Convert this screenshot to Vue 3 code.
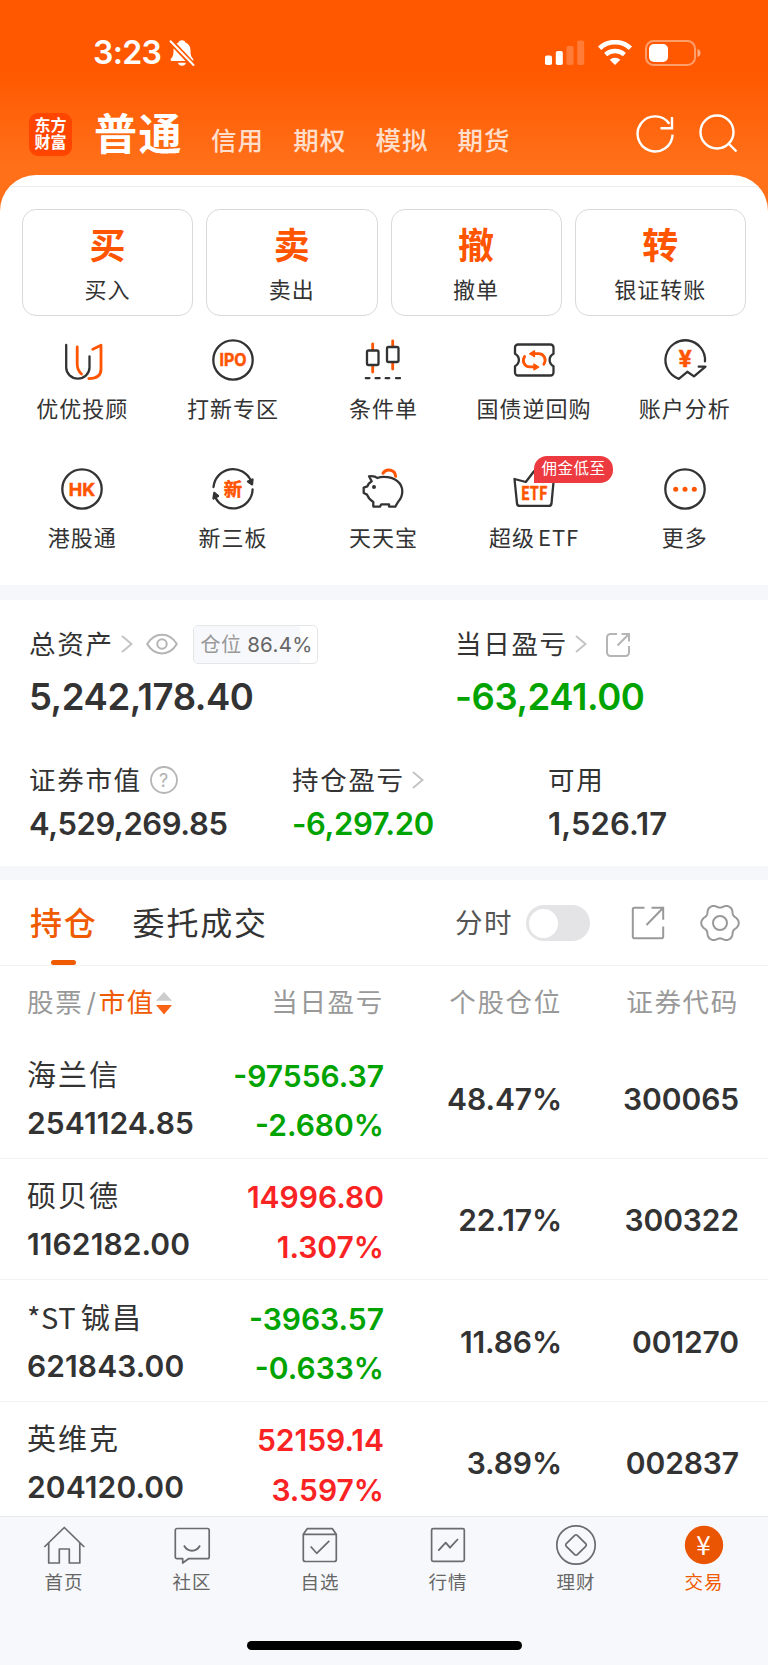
<template>
  <div class="app">

    <!-- Status bar -->
    <div class="status-bar">
      <span class="time">3:23</span>
      <svg class="bell" viewBox="0 0 26 28" width="26" height="28">
        <path d="M13 1.200c1.700 0 3 .9 3.500 2.300 3.200 1.300 5 4 5 7.700 0 5 .8 6.500 2.500 8.500.9 1.100.5 2.300-1 2.300H3c-1.500 0-1.900-1.200-1-2.300 1.700-2 2.500-3.500 2.500-8.500 0-3.700 1.800-6.400 5-7.700C10 2.100 11.300 1.200 13 1.200Z" fill="#fff" />
        <path d="M9 23.800h8c-.4 1.800-2 3-4 3s-3.600-1.200-4-3Z" fill="#fff" />
        <path d="M0 0.500 25 27" stroke="#ff5800" stroke-width="5.500" />
        <path d="M1.500 2.200 24.500 26" stroke="#fff" stroke-width="2" stroke-linecap="round" />
      </svg>
      <div class="status-icons">
        <svg class="signal" viewBox="0 0 40 26" width="40" height="26" fill="#fff">
          <rect x="0" y="15.500" width="7" height="9.500" rx="1.800" />
          <rect x="10.800" y="11" width="7" height="14" rx="1.800" />
          <rect x="21.500" y="6" width="7" height="19" rx="1.800" opacity=".22" />
          <rect x="32.200" y="0.500" width="7" height="24.500" rx="1.800" opacity=".22" />
        </svg>
        <svg class="wifi" viewBox="0 0 36 26" width="36" height="26">
          <path d="M2.600 8.300a22.500 22.500 0 0 1 30.800 0" fill="none" stroke="#fff" stroke-width="4.800" />
          <path d="M8.600 14.600a14 14 0 0 1 18.800 0" fill="none" stroke="#fff" stroke-width="4.500" />
          <path d="M18 25 12.700 19.800a7.800 7.800 0 0 1 10.600 0Z" fill="#fff" />
        </svg>
        <svg class="battery" viewBox="0 0 56 26" width="56" height="26">
          <rect x="1" y="1" width="49" height="24" rx="7.500" fill="none" stroke="#fff" stroke-opacity=".42" stroke-width="2" />
          <rect x="4" y="4" width="19" height="18" rx="5" fill="#fff" />
          <path d="M52.500 9c2 .6 3 2 3 4s-1 3.400-3 4Z" fill="#fff" fill-opacity=".5" />
        </svg>
      </div>
    </div>

    <!-- Account types -->
    <header class="header">
      <div class="logo"><span>东方</span><span>财富</span></div>
      <h1 class="title">普通</h1>
      <nav class="account-tabs">
        <span v-for="t in accountTabs" :key="t">{{ t }}</span>
      </nav>
      <svg class="refresh" viewBox="0 0 40 40" width="40" height="40" fill="none" stroke="#fff" stroke-width="2.400">
        <path d="M37.600 20.600a17.500 17.500 0 1 1-3.200-10.800" />
        <path d="M37 3v11.200H25.500" />
      </svg>
      <svg class="search" viewBox="0 0 40 40" width="40" height="40" fill="none" stroke="#fff" stroke-width="2.400">
        <circle cx="18" cy="18" r="16.500" />
        <path d="m29 29 8.500 8.500" />
      </svg>
    </header>

    <main class="panel">
      <div class="panel-line"></div>

      <!-- Main actions -->
      <div class="actions">
        <button v-for="a in actions" :key="a.label" class="action">
          <span class="action-mark">{{ a.mark }}</span>
          <span class="action-label">{{ a.label }}</span>
        </button>
      </div>

      <!-- Shortcuts -->
      <div class="shortcuts">
        <div v-for="s in shortcuts" :key="s.icon" class="shortcut">
          <div class="shortcut-icon">
            <svg viewBox="0 0 48 48" width="48" height="48" fill="none" stroke="#333" stroke-width="2.300" stroke-linejoin="round" stroke-linecap="round">
              <template v-if="s.icon === 'advisor'">
                <path d="M8.200 9v22.500a11.600 11 0 0 0 23.300 0V20.300" />
                <path d="M19.200 11v17c0 4.500 1.500 7.500 4.300 10" stroke="#ff5400" stroke-width="2.800" />
                <path d="m34.800 13.300 8.200-4.100V33c0 6-4 9.600-12.200 9.600" stroke="#ff5400" stroke-width="2.800" />
              </template>
              <template v-else-if="s.icon === 'ipo'">
                <circle cx="24" cy="24" r="19.700" />
                <text x="24" y="30.200" class="glyph" font-size="17" textLength="27" lengthAdjust="spacingAndGlyphs">IPO</text>
              </template>
              <template v-else-if="s.icon === 'candles'">
                <path d="M13.700 8v6M13.700 30v6M33.700 5v5.500M33.700 27v6" stroke="#ff5400" stroke-width="2.800" />
                <rect x="8" y="14.500" width="11.500" height="14.500" rx="1.500" />
                <rect x="28" y="11" width="11.500" height="15" rx="1.500" />
                <path d="M6.800 42.200h3.600M16.600 42.200h4M26.700 42.200h3.500M37 42.200h4" />
              </template>
              <template v-else-if="s.icon === 'repo'">
                <path d="M8 8.500h32.500a3 3 0 0 1 3 3v6.300c-5.200 3-5.200 9.400 0 12.400v6.300a3 3 0 0 1-3 3H8a3 3 0 0 1-3-3v-6.300c5.200-3 5.200-9.400 0-12.400v-6.300a3 3 0 0 1 3-3Z" />
                <g stroke="#ff5400" stroke-width="2.800">
                  <path d="M33.800 28.200c3-4.700.3-10.500-5.300-10.500H25" />
                  <path d="M14.600 20.400c-3 4.700-.3 10.500 5.300 10.500h3.500" />
                  <path d="m19.600 17.700 4.900-3v6ZM28.800 30.900l-4.900 3v-6Z" fill="#ff5400" stroke-width="1.200" />
                </g>
              </template>
              <template v-else-if="s.icon === 'analysis'">
                <path d="M44 25.300A19.800 19.800 0 1 0 17.800 42.800l8.500-7 6.700 4.600 11.500-9.700h-6.800" />
                <text x="24.300" y="31.200" class="glyph" font-size="23.500">¥</text>
              </template>
              <template v-else-if="s.icon === 'hk'">
                <circle cx="24" cy="24" r="19.700" />
                <text x="24" y="30.800" class="glyph" font-size="18">HK</text>
              </template>
              <template v-else-if="s.icon === 'neeq'">
                <path d="M4.500 22a19.600 19.600 0 0 1 37.500-6M43.600 24.500A19.600 19.600 0 0 1 6.200 32" />
                <path d="m39 16.500 4.500-2-.5 4.800ZM9 31l-4.500 2.500.8-5.500Z" fill="#333" />
                <text x="24" y="30.800" class="glyph" font-size="18.500">新</text>
              </template>
              <template v-else-if="s.icon === 'pig'">
                <path d="M10 11.300c3-.3 6.500 0 8.300 1.700 2-.8 4-1.100 6.500-1.100 11.500 0 18.500 6.300 18.500 14.400 0 4.500-1.700 8-4.300 10.700l-2.700 4.600H30v-2.300h-7.700L21 41.600h-6.700V37c-3.200-1.700-5-4.400-6.300-7.400L4.700 28v-5.400l3.600-1.300c.8-2.300 2.400-3.800 4.400-5Z" />
                <circle cx="15" cy="22" r="2" fill="#333" stroke="none" />
                <path d="M24 8.200c3.300-5.500 12.300-3.600 12.600 3" stroke="#ff5400" stroke-width="3" />
              </template>
              <template v-else-if="s.icon === 'etf'">
                <path d="m4.500 14 11.300 3L24.200 6l8.400 11 11.200-3-2.300 24.500c-.2 1.700-1 2.400-2.700 2.400H9.700C8 40.900 7.200 40.200 7 38.500Z" />
                <text x="24.200" y="34.500" class="glyph glyph--noto" font-size="18" textLength="26.500" lengthAdjust="spacingAndGlyphs">ETF</text>
              </template>
              <template v-else>
                <circle cx="24" cy="24" r="19.700" />
                <g fill="#ff5400" stroke="none">
                  <circle cx="14.700" cy="24.200" r="2.500" />
                  <circle cx="24" cy="24.200" r="2.500" />
                  <circle cx="33.300" cy="24.200" r="2.500" />
                </g>
              </template>
            </svg>
            <span v-if="s.badge" class="badge">{{ s.badge }}</span>
          </div>
          <span class="shortcut-label">{{ s.label }}<span v-if="s.latin" class="latin">{{ s.latin }}</span></span>
        </div>
      </div>

      <!-- Assets -->
      <section class="assets">
        <div class="assets-main">
          <div class="asset">
            <div class="asset-label">
              总资产
              <svg class="chevron" viewBox="0 0 12 18" width="12" height="18"><path d="m1 1 9.500 8L1 17" /></svg>
              <svg class="eye" viewBox="0 0 32 24" width="32" height="24">
                <path d="M1.200 12C8.500-.5 23.500-.5 30.800 12 23.500 24.500 8.500 24.500 1.200 12Z" />
                <circle cx="16" cy="12" r="4.700" />
              </svg>
              <span class="position">
                <span class="position-fill" :style="{ width: position + '%' }"></span>
                <span class="position-text">仓位 <b>{{ position }}%</b></span>
              </span>
            </div>
            <div class="asset-value asset-value--lg">5,242,178.40</div>
          </div>
          <div class="asset">
            <div class="asset-label">
              当日盈亏
              <svg class="chevron" viewBox="0 0 12 18" width="12" height="18"><path d="m1 1 9.500 8L1 17" /></svg>
              <svg class="share" viewBox="0 0 26 26" width="26" height="26">
                <path d="M12 2H5.500A3.500 3.500 0 0 0 2 5.500v15A3.500 3.500 0 0 0 5.500 24h15a3.500 3.500 0 0 0 3.500-3.500V14M16.500 2H24v7.500M24 2 12.500 13.500" />
              </svg>
            </div>
            <div class="asset-value asset-value--lg down">-63,241.00</div>
          </div>
        </div>
        <div class="assets-sub">
          <div class="asset">
            <div class="asset-label">
              证券市值
              <svg class="help" viewBox="0 0 28 28" width="28" height="28">
                <circle cx="14" cy="14" r="13" fill="none" stroke="#b5b5b5" stroke-width="1.800" />
                <text x="14.500" y="20.500" text-anchor="middle" font-size="18" fill="#b0b0b0">?</text>
              </svg>
            </div>
            <div class="asset-value">4,529,269.85</div>
          </div>
          <div class="asset">
            <div class="asset-label">
              持仓盈亏
              <svg class="chevron" viewBox="0 0 12 18" width="12" height="18"><path d="m1 1 9.500 8L1 17" /></svg>
            </div>
            <div class="asset-value down">-6,297.20</div>
          </div>
          <div class="asset">
            <div class="asset-label">可用</div>
            <div class="asset-value asset-value--free">1,526.17</div>
          </div>
        </div>
      </section>

      <!-- Holdings -->
      <section class="holdings">
        <div class="tabs">
          <span
            v-for="t in tabs"
            :key="t"
            class="tab"
            :class="{ active: t === activeTab }"
            @click="activeTab = t"
          >{{ t }}</span>
          <div class="tools">
            <span class="tools-label">分时</span>
            <span class="switch" :class="{ on: minuteChart }" @click="minuteChart = !minuteChart"></span>
            <svg class="export" viewBox="0 0 34 34" width="34" height="34">
              <path d="M13.500 1.800H3.300A1.500 1.500 0 0 0 1.800 3.300v27.400a1.500 1.500 0 0 0 1.500 1.500h27.400a1.500 1.500 0 0 0 1.500-1.500V20.500M20.500 1.800h11.700v12M32 2 15.500 19" />
            </svg>
            <svg class="gear" viewBox="0 0 40 40" width="40" height="40">
              <path :d="gearPath" />
              <circle cx="20" cy="20" r="7" />
            </svg>
          </div>
        </div>

        <div class="row row--head">
          <span class="col-name">
            股票<i>/</i><em>市值</em>
            <svg viewBox="0 0 16 24" width="16" height="24">
              <path d="M8 1 16 9.800H0Z" fill="#ccc" />
              <path d="M8 23.500 0 14h16Z" fill="#f96316" />
            </svg>
          </span>
          <span class="col-pl">当日盈亏</span>
          <span class="col-pos">个股仓位</span>
          <span class="col-code">证券代码</span>
        </div>

        <div v-for="h in holdings" :key="h.code" class="row">
          <div class="col-name">
            <div class="stock-name"><span v-if="h.flag" class="flag">{{ h.flag }}</span>{{ h.name }}</div>
            <div class="stock-value">{{ h.value }}</div>
          </div>
          <div class="col-pl" :class="trend(h.profit)">
            <div>{{ h.profit }}</div>
            <div>{{ h.rate }}</div>
          </div>
          <div class="col-pos">{{ h.position }}</div>
          <div class="col-code">{{ h.code }}</div>
        </div>
      </section>
    </main>

    <!-- Bottom navigation -->
    <footer class="bottom">
      <nav class="bottom-nav">
        <div v-for="n in navItems" :key="n.icon" class="nav-item" :class="{ active: n.icon === 'trade' }">
          <svg viewBox="0 0 48 48" width="48" height="48" fill="none" stroke="#6b6b6d" stroke-width="1.700" stroke-linejoin="round">
            <template v-if="n.icon === 'home'">
              <path d="M4.300 26 24.300 6.500 44.300 26M8.700 22v20h10.600V28h10V42h10.500V22" />
            </template>
            <template v-else-if="n.icon === 'community'">
              <path d="M9 7.500h30.500a1.700 1.700 0 0 1 1.700 1.700v26.800a1.700 1.700 0 0 1-1.700 1.700h-19L14.700 42v-4.300H9A1.700 1.700 0 0 1 7.300 36V9.200A1.700 1.700 0 0 1 9 7.500Z" />
              <path d="M16 24.500c3.800 7 12.200 7 16 0" stroke-width="1.800" />
            </template>
            <template v-else-if="n.icon === 'watch'">
              <path d="M7.300 13.300h33v25.200a2 2 0 0 1-2 2h-29a2 2 0 0 1-2-2ZM7.300 13.300l3.900-5.600h25.200l3.900 5.600" />
              <path d="m14.700 25.500 6 6.800 12.600-12.500" />
            </template>
            <template v-else-if="n.icon === 'market'">
              <rect x="7.600" y="7.600" width="32.700" height="32.700" rx="1.500" />
              <path d="m14.300 29.700 7.400-8 4.300 5 8-8.700" stroke-width="1.800" />
            </template>
            <template v-else-if="n.icon === 'finance'">
              <circle cx="24" cy="24" r="19.200" />
              <path d="m25.300 14.300 8.400 8.400a1.800 1.800 0 0 1 0 2.600l-8.400 8.400a1.800 1.800 0 0 1-2.600 0l-8.400-8.400a1.800 1.800 0 0 1 0-2.600l8.400-8.400a1.800 1.800 0 0 1 2.600 0Z" />
            </template>
            <template v-else>
              <circle cx="24" cy="24" r="19.200" fill="#ea5504" stroke="none" />
              <text x="24" y="33.500" class="yen" font-size="26">¥</text>
            </template>
          </svg>
          <span>{{ n.label }}</span>
        </div>
      </nav>
      <div class="home-indicator"></div>
    </footer>

  </div>
</template>

<script setup>
import { ref } from 'vue'

const accountTabs = ['信用', '期权', '模拟', '期货']

const actions = [
  { mark: '买', label: '买入' },
  { mark: '卖', label: '卖出' },
  { mark: '撤', label: '撤单' },
  { mark: '转', label: '银证转账' }
]

const shortcuts = [
  { icon: 'advisor', label: '优优投顾' },
  { icon: 'ipo', label: '打新专区' },
  { icon: 'candles', label: '条件单' },
  { icon: 'repo', label: '国债逆回购' },
  { icon: 'analysis', label: '账户分析' },
  { icon: 'hk', label: '港股通' },
  { icon: 'neeq', label: '新三板' },
  { icon: 'pig', label: '天天宝' },
  { icon: 'etf', label: '超级', latin: 'ETF', badge: '佣金低至' },
  { icon: 'more', label: '更多' }
]

const position = ref(86.4)

const tabs = ['持仓', '委托成交']
const activeTab = ref('持仓')
const minuteChart = ref(false)

const holdings = [
  { name: '海兰信', value: '2541124.85', profit: '-97556.37', rate: '-2.680%', position: '48.47%', code: '300065' },
  { name: '硕贝德', value: '1162182.00', profit: '14996.80', rate: '1.307%', position: '22.17%', code: '300322' },
  { flag: '*ST', name: '铖昌', value: '621843.00', profit: '-3963.57', rate: '-0.633%', position: '11.86%', code: '001270' },
  { name: '英维克', value: '204120.00', profit: '52159.14', rate: '3.597%', position: '3.89%', code: '002837' }
]

const navItems = [
  { icon: 'home', label: '首页' },
  { icon: 'community', label: '社区' },
  { icon: 'watch', label: '自选' },
  { icon: 'market', label: '行情' },
  { icon: 'finance', label: '理财' },
  { icon: 'trade', label: '交易' }
]

const trend = (v) => (v.startsWith('-') ? 'down' : 'up')

// Six-lobed gear outline
const gearPath = Array.from({ length: 120 }, (_, i) => {
  const a = (i / 120) * Math.PI * 2
  const r = 17.2 + 1.7 * Math.cos(6 * a) - 0.15 * Math.cos(12 * a)
  return `${i ? 'L' : 'M'}${(20 + r * Math.cos(a)).toFixed(2)} ${(20 + r * Math.sin(a)).toFixed(2)}`
}).join('') + 'Z'
</script>

<style>
body {
  margin: 0;
  background: #fff;
}
</style>

<style scoped>
.app {
  height: 1665px;
  display: flex;
  flex-direction: column;
  overflow: hidden;
  font-family: Inter, "Noto Sans CJK SC", sans-serif;
  color: #333;
  background: linear-gradient(#ff5800 0, #ff5800 70px, #ff7019 165px, #ff7019 220px);
}

.status-bar {
  flex: none;
  height: 105px;
  display: flex;
  align-items: center;
  padding: 0 67px 0 93px;
  box-sizing: border-box;
  color: #fff;
}

.time {
  font-size: 32px;
  font-weight: 600;
  line-height: 40px;
  letter-spacing: -0.7px;
  width: 76px;
}

.status-icons {
  display: flex;
  margin-left: auto;
}

.signal { margin-right: 12px; }
.wifi { margin-right: 12px; }

.header {
  flex: none;
  height: 70px;
  display: flex;
  align-items: center;
  padding: 0 29px;
  color: #fff;
}

.logo {
  width: 43px;
  height: 43px;
  margin-top: -12px;
  border-radius: 9px;
  background: #ff4500;
  display: flex;
  flex-direction: column;
  align-items: center;
  justify-content: center;
  font-size: 16px;
  font-weight: 700;
  line-height: 17px;
}

.title {
  margin: -12px 0 0 22px;
  font-size: 43px;
  font-weight: 700;
  line-height: 50px;
  letter-spacing: 1.5px;
}

.account-tabs {
  display: flex;
  gap: 29.2px;
  margin: 2px 0 0 28px;
  font-size: 25.5px;
  font-weight: 500;
  line-height: 30px;
  letter-spacing: 1px;
  color: rgba(255, 255, 255, 0.8);
}

.refresh { margin: -12px 0 0 auto; }
.search { margin: -12px 0 0 24px; }

.panel {
  flex: 1;
  min-height: 0;
  overflow: hidden;
  background: #fff;
  border-radius: 36px 36px 0 0;
}

.panel-line {
  height: 1px;
  margin-top: 11px;
  background: #ececec;
}

.actions {
  display: grid;
  grid-template-columns: repeat(4, 1fr);
  gap: 13px;
  padding: 22px 22px 0;
}

.action {
  height: 107px;
  padding: 15px 0 0;
  display: flex;
  flex-direction: column;
  align-items: center;
  background: #fff;
  border: 1px solid #d9d9d9;
  border-radius: 14px;
  font-family: inherit;
  color: #333;
}

.action-mark {
  font-size: 36px;
  font-weight: 700;
  line-height: 42px;
  color: #ff5400;
}

.action-label {
  margin-top: 10px;
  font-size: 22px;
  line-height: 26px;
  letter-spacing: 1px;
}

.shortcuts {
  display: grid;
  grid-template-columns: repeat(5, 1fr);
  row-gap: 42px;
  padding: 20px 8px 33px 7px;
}

.shortcut {
  height: 87px;
  display: flex;
  flex-direction: column;
  align-items: center;
}

.shortcut-icon {
  position: relative;
  width: 48px;
  height: 48px;
}

.shortcut-label {
  margin-top: 11px;
  font-family: "Noto Sans CJK SC", sans-serif;
  font-size: 22px;
  line-height: 24px;
  letter-spacing: 1px;
  white-space: nowrap;
}

.latin { margin-left: 3px; }

.glyph {
  font-family: Inter, "Noto Sans CJK SC", sans-serif;
  font-weight: 700;
  fill: #ff5400;
  stroke: #ff5400;
  stroke-width: 0.5px;
  text-anchor: middle;
}

.glyph--noto { font-family: "Noto Sans CJK SC", sans-serif; }

.badge {
  position: absolute;
  left: 24px;
  top: -9px;
  width: 79px;
  height: 27px;
  border-radius: 13px 13px 13px 0;
  background: #ec3a40;
  color: #fff;
  font-size: 15.5px;
  line-height: 26px;
  letter-spacing: 0.5px;
  text-align: center;
  white-space: nowrap;
}

.assets {
  height: 266px;
  border-top: 15px solid #f6f7fa;
  border-bottom: 14px solid #f6f7fa;
}

.assets-main {
  display: grid;
  grid-template-columns: 426px 1fr;
  padding: 24px 0 0 29px;
}

.assets-sub {
  display: grid;
  grid-template-columns: 263px 256px 1fr;
  padding: 43px 0 0 29px;
}

.asset-label {
  height: 40px;
  display: flex;
  align-items: center;
  font-size: 26.5px;
  line-height: 40px;
  letter-spacing: 1.700px;
}

.chevron,
.eye,
.share {
  fill: none;
  stroke: #b5b5b5;
  stroke-width: 2px;
}

.chevron {
  margin-left: 7px;
  stroke: #c4c4c4;
}

.eye { margin-left: 13px; }
.share { margin-left: 18px; margin-top: 2px; }
.help { margin-left: 8px; }

.position {
  position: relative;
  width: 123px;
  height: 37px;
  margin-left: 15px;
  border: 1px solid #e6e6e8;
  border-radius: 5px;
  overflow: hidden;
}

.position-fill {
  display: block;
  height: 100%;
  background: #f7f8fb;
}

.position-text {
  position: absolute;
  inset: 0 0 0 7px;
  font-size: 20px;
  line-height: 38px;
  letter-spacing: 0.3px;
  color: #999;
  white-space: nowrap;
}

.position-text b {
  font-size: 20.5px;
  font-weight: 400;
  color: #666;
}

.asset-value {
  height: 40px;
  margin-top: 4px;
  font-size: 31px;
  font-weight: 600;
  line-height: 40px;
  letter-spacing: -0.400px;
}

.asset-value--lg {
  margin-top: 13px;
  font-size: 36.5px;
  letter-spacing: -0.450px;
}

.asset-value--free { letter-spacing: 0.100px; }

.down { color: #00a300; }
.up { color: #fa2323; }

.tabs {
  height: 86px;
  box-sizing: border-box;
  display: flex;
  padding: 0 28px 0 30px;
  border-bottom: 1px solid #f2f2f2;
  line-height: 88px;
}

.tab {
  position: relative;
  height: 85px;
  margin-right: 35px;
  font-size: 32px;
  letter-spacing: 1.800px;
}

.tab.active {
  font-weight: 500;
  color: #f05a00;
}

.tab.active::after {
  content: "";
  position: absolute;
  left: 21px;
  bottom: 0;
  width: 25px;
  height: 5px;
  border-radius: 2.500px;
  background: #f05a00;
}

.tools {
  height: 86px;
  display: flex;
  align-items: center;
  margin-left: auto;
}

.tools-label {
  font-size: 27.5px;
  letter-spacing: 1.500px;
  color: #555;
}

.switch {
  width: 64px;
  height: 36px;
  margin-left: 13px;
  border-radius: 18px;
  background: #e4e4e6;
}

.switch::before {
  content: "";
  display: block;
  width: 29px;
  height: 29px;
  margin: 3.500px 0 0 3px;
  border-radius: 50%;
  background: #fff;
}

.switch.on::before { margin-left: 32px; }

.export,
.gear {
  fill: none;
  stroke: #999;
  stroke-width: 2px;
}

.export { margin-left: 41px; }
.gear { margin-left: 35px; }

.row {
  height: 121.500px;
  box-sizing: border-box;
  display: grid;
  grid-template-columns: 190px 167px 178px 177px;
  align-items: center;
  padding: 3px 29px 0 27px;
  border-bottom: 1px solid #f2f2f2;
  font-size: 30px;
  font-weight: 600;
}

.row--head {
  height: 71px;
  padding-top: 2px;
  border: none;
  font-size: 26.500px;
  font-weight: 400;
  line-height: 49.500px;
  letter-spacing: 1.700px;
  color: #999;
}

.row--head .col-name {
  display: flex;
  align-items: center;
}

.row--head i {
  font-style: normal;
  margin: 0 1px 0 3px;
}

.row--head em {
  font-style: normal;
  color: #f05a00;
}

.row--head svg { margin-left: 1px; }

.col-pl,
.col-pos,
.col-code {
  text-align: right;
}

.col-pl {
  line-height: 49.500px;
  padding-top: 5px;
}

.row--head .col-pl { padding-top: 0; }

.col-pos,
.col-code {
  letter-spacing: -0.100px;
}

.row--head .col-pos,
.row--head .col-code {
  letter-spacing: 1.700px;
}

.stock-name {
  font-family: "Noto Sans CJK SC", sans-serif;
  font-size: 29px;
  font-weight: 400;
  line-height: 46px;
  letter-spacing: 2px;
}

.flag {
  margin-right: 5px;
  letter-spacing: 0.500px;
}

.stock-value {
  line-height: 49px;
  padding-top: 3px;
  letter-spacing: 0.100px;
}

.bottom {
  flex: none;
  height: 149px;
  box-sizing: border-box;
  border-top: 1px solid #e8e8ea;
  background: #f7f8fb;
}

.bottom-nav {
  display: grid;
  grid-template-columns: repeat(6, 1fr);
  padding-top: 4px;
}

.nav-item {
  display: flex;
  flex-direction: column;
  align-items: center;
  font-size: 18.500px;
  line-height: 24px;
  letter-spacing: 1px;
  color: #666;
}

.nav-item span { margin-top: 1px; }
.nav-item.active { color: #f05a00; }

.yen {
  font-family: "Noto Sans CJK SC", sans-serif;
  font-weight: 400;
  fill: #fff;
  stroke: none;
  text-anchor: middle;
}

.home-indicator {
  width: 275px;
  height: 9px;
  margin: 47px auto 0;
  border-radius: 5px;
  background: #000;
}
</style>
